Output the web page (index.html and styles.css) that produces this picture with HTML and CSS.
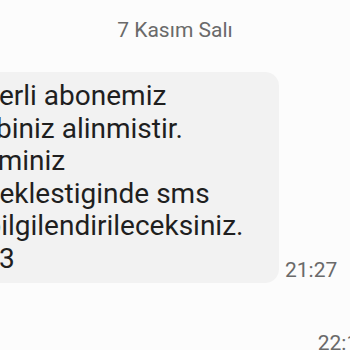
FILE: index.html
```html
<!DOCTYPE html>
<html lang="tr">
<head>
<meta charset="utf-8">
<link rel="stylesheet" href="styles.css">
</head>
<body>
<div class="chat">
  <div class="date">7 Kasım Salı</div>
  <div class="row received">
    <div class="bubble">Degerli abonemiz<br>talebiniz alinmistir.<br><span class="pre-wide">Isle</span>miniz<br><span class="pre-tight">gerc</span>eklestiginde sms<br>ile bilgilendirileceksiniz.<br>B003</div>
    <div class="time">21:27</div>
  </div>
  <div class="row sent">
    <div class="time">22:15</div>
    <div class="bubble sent-bubble">Tamam</div>
  </div>
</div>
</body>
</html>
```
FILE: styles.css
```css
html, body {
  margin: 0;
  padding: 0;
}
body {
  width: 350px;
  height: 350px;
  overflow: hidden;
  background: #fcfcfc;
  font-family: Roboto, "Noto Sans", sans-serif;
}
.chat {
  display: flex;
  flex-direction: column;
}
.date {
  text-align: center;
  font-size: 21px;
  line-height: 24px;
  color: #6a6a6a;
  padding-top: 18px;
}
.row {
  display: flex;
}
.received {
  margin-top: 30px;
  align-items: flex-end;
  gap: 6px;
}
.bubble {
  background: #f2f2f2;
  border-radius: 14px;
  color: #1f1f1f;
  font-size: 28px;
  line-height: 32.6px;
  white-space: nowrap;
  flex: none;
}
.received .bubble {
  margin-left: -62px;
  width: 313px;
  padding: 8px 16px 7px 12px;
}
.pre-wide {
  letter-spacing: 1px;
}
.pre-tight {
  letter-spacing: -1.25px;
}
.time {
  font-size: 21px;
  line-height: 24px;
  color: #6a6a6a;
  white-space: nowrap;
  flex: none;
}
.received .time {
  margin-bottom: 1px;
}
.sent {
  margin-top: 48px;
  justify-content: flex-end;
  gap: 6px;
  margin-right: -200px;
}
.sent-bubble {
  width: 150px;
  padding: 8px 12px;
  background: #e9e9e9;
}
```
